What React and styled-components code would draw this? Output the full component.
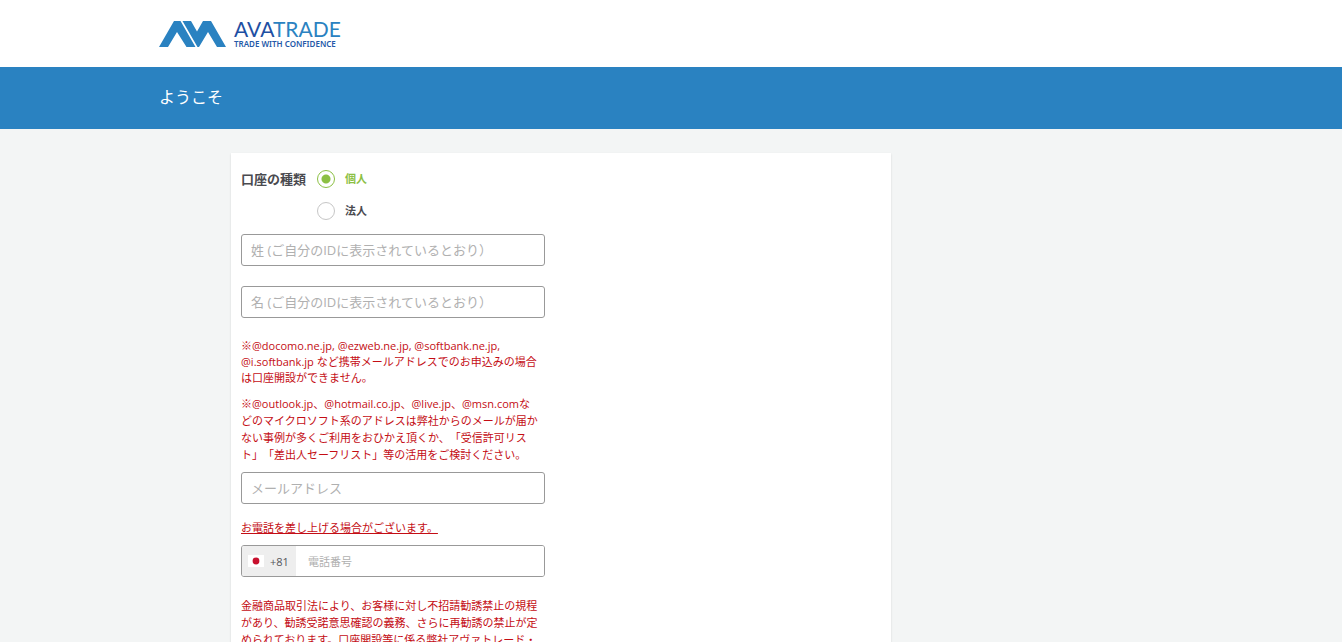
import React, { useState } from "react";
import styled, { createGlobalStyle } from "styled-components";

const GlobalStyle = createGlobalStyle`
  *, *::before, *::after { box-sizing: border-box; }
  body {
    margin: 0;
    background: #f3f5f5;
    color: #4a4a4f;
    font-family: "Open Sans", "Noto Sans CJK JP", sans-serif;
    font-size: 13px;
    text-spacing-trim: space-all;
  }
  input, button { font-family: inherit; }
`;

const Container = styled.div`
  max-width: 1024px;
  margin: 0 auto;
`;

const Header = styled.header`
  background: #fff;
  padding: 20px 0 19px;
`;

const LogoLink = styled.a`
  display: block;
  width: 181px;
  height: 28px;

  svg { display: block; overflow: visible; }
`;

const Banner = styled.div`
  background: #2a82c1;
  color: #fff;
`;

const Title = styled.h1`
  margin: 0;
  padding: 18px 0 20px;
  font-size: 16px;
  font-weight: 400;
  line-height: 24px;
`;

const Card = styled.form`
  max-width: 660px;
  margin: 24px 0 0 72px;
  padding: 17px 10px 40px;
  background: #fff;
  box-shadow: 0 1px 2px rgba(0, 0, 0, 0.12);
`;

const Column = styled.div`
  max-width: 304px;
`;

const AccountType = styled.fieldset`
  display: flex;
  gap: 11px;
  margin: 0 0 14px;
  padding: 0;
  border: 0;
`;

const GroupLabel = styled.span`
  font-size: 13px;
  font-weight: 700;
  line-height: 18px;
`;

const Options = styled.div`
  display: flex;
  flex-direction: column;
  gap: 14px;
`;

const Option = styled.label`
  display: flex;
  align-items: center;
  gap: 10px;
  height: 18px;
  font-size: 11px;
  font-weight: 700;
  line-height: 18px;
  color: ${(p) => (p.$active ? "#8cc044" : "#4a4a4f")};
`;

const Radio = styled.input`
  appearance: none;
  width: 18px;
  height: 18px;
  margin: 0;
  border: 1px solid #c6c6c6;
  border-radius: 50%;
  background: #fff;

  &:checked {
    border-color: #8cc044;
    background: radial-gradient(circle, #8cc044 4px, transparent 5px);
  }
`;

const Field = styled.input`
  display: block;
  width: 100%;
  height: 32px;
  margin: 0 0 ${(p) => p.$gap || 20}px;
  padding: 0 9px;
  border: 1px solid #999;
  border-radius: 3px;
  background: #fff;
  color: #4a4a4f;
  font-size: 13px;

  &::placeholder { color: #b0b0b0; opacity: 1; }
`;

const Notice = styled.p`
  margin: 0 0 9px;
  color: #c40d14;
  font-size: 11px;
  line-height: ${(p) => (p.$tight ? 16 : 17)}px;
  white-space: nowrap;
`;

const CallNotice = styled(Notice)`
  text-decoration: underline;
`;

const PhoneField = styled.div`
  display: flex;
  height: 32px;
  margin-bottom: 20px;
  border: 1px solid #999;
  border-radius: 3px;
  overflow: hidden;
`;

const CountryButton = styled.button`
  display: flex;
  align-items: center;
  gap: 6px;
  width: 54px;
  padding: 0 6px;
  border: 0;
  background: #eee;
  color: #55555a;
  font-size: 11px;
`;

const PhoneInput = styled.input`
  flex: 1;
  min-width: 0;
  padding: 0 12px;
  border: 0;
  background: #fff;
  font-size: 11px;

  &::placeholder { color: #b0b0b0; opacity: 1; }
`;

function Logo() {
  return (
    <svg width="181" height="28" viewBox="0 0 181 28" role="img" aria-label="AvaTrade">
      <g fill="#2a82c1">
        <path d="M0 27 15 1h6.5l15 26H27.500L18 12 9 27z" />
        <path d="M23.500 1H32l6 10.500L44 1h8l15 26h-9L49 12l-9 15h-1.500z" />
      </g>
      <text x="75" y="17" fontFamily="Lato, sans-serif" fontSize="21" fill="#1e4fa3">
        AVA<tspan fill="#2a82c1">TRADE</tspan>
      </text>
      <text x="75" y="27" fontFamily="'Noto Sans', sans-serif" fontSize="8" fontWeight="600" fill="#2458a8">
        TRADE WITH CONFIDENCE
      </text>
    </svg>
  );
}

const accountTypes = [
  { value: "personal", label: "個人" },
  { value: "corporate", label: "法人" },
];

export default function App() {
  const [account, setAccount] = useState("personal");

  return (
    <>
      <GlobalStyle />
      <Header>
        <Container>
          <LogoLink href="#"><Logo /></LogoLink>
        </Container>
      </Header>
      <Banner>
        <Container>
          <Title>ようこそ</Title>
        </Container>
      </Banner>
      <Container as="main">
        <Card>
          <Column>
            <AccountType aria-labelledby="account-type">
              <GroupLabel id="account-type">口座の種類</GroupLabel>
              <Options>
                {accountTypes.map(({ value, label }) => (
                  <Option key={value} $active={account === value}>
                    <Radio
                      type="radio"
                      name="account"
                      value={value}
                      checked={account === value}
                      onChange={() => setAccount(value)}
                    />
                    {label}
                  </Option>
                ))}
              </Options>
            </AccountType>
            <Field type="text" aria-label="姓" placeholder="姓 (ご自分のIDに表示されているとおり）" />
            <Field type="text" aria-label="名" placeholder="名 (ご自分のIDに表示されているとおり）" />
            <Notice $tight>
              ※@docomo.ne.jp, @ezweb.ne.jp, @softbank.ne.jp,<br />
              @i.softbank.jp など携帯メールアドレスでのお申込みの場合<br />
              は口座開設ができません。
            </Notice>
            <Notice>
              ※@outlook.jp、@hotmail.co.jp、@live.jp、@msn.comな<br />
              どのマイクロソフト系のアドレスは弊社からのメールが届か<br />
              ない事例が多くご利用をおひかえ頂くか、「受信許可リス<br />
              ト」「差出人セーフリスト」等の活用をご検討ください。
            </Notice>
            <Field type="email" $gap={15} aria-label="メールアドレス" placeholder="メールアドレス" />
            <CallNotice>お電話を差し上げる場合がございます。</CallNotice>
            <PhoneField>
              <CountryButton type="button" aria-label="+81">
                <svg width="16" height="12" viewBox="0 0 16 12" aria-hidden="true">
                  <path d="M0 0h16v12H0z" fill="#fff" />
                  <circle cx="8" cy="6" r="3.4" fill="#c8102e" />
                </svg>
                +81
              </CountryButton>
              <PhoneInput type="tel" aria-label="電話番号" placeholder="電話番号" />
            </PhoneField>
            <Notice>
              金融商品取引法により、お客様に対し不招請勧誘禁止の規程<br />
              があり、勧誘受諾意思確認の義務、さらに再勧誘の禁止が定<br />
              められております。口座開設等に係る弊社アヴァトレード・
            </Notice>
          </Column>
        </Card>
      </Container>
    </>
  );
}
